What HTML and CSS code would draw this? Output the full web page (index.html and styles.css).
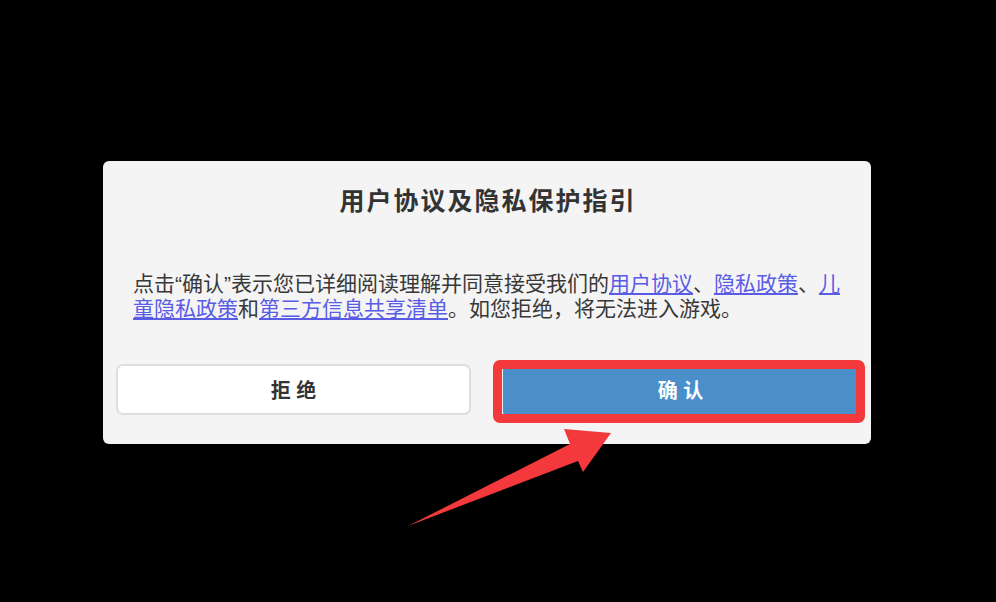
FILE: index.html
```html
<!DOCTYPE html>
<html lang="zh-CN">
<head>
<meta charset="utf-8">
<title>用户协议及隐私保护指引</title>
<link rel="stylesheet" href="styles.css">
</head>
<body>
<div class="stage">
  <div class="dialog">
    <h1 class="title">用户协议及隐私保护指引</h1>
    <p class="msg">点击“确认”表示您已详细阅读理解并同意接受我们的<a class="link" href="#">用户协议</a>、<a class="link" href="#">隐私政策</a>、<a class="link" href="#">儿童隐私政策</a>和<a class="link" href="#">第三方信息共享清单</a>。如您拒绝，将无法进入游戏。</p>
    <div class="actions">
      <button class="btn btn-refuse">拒 绝</button>
      <button class="btn btn-confirm">确 认</button>
    </div>
  </div>
</div>
<div class="highlight"></div>
<svg class="arrow" width="996" height="602" viewBox="0 0 996 602">
  <polygon points="408,526 570,444 564,429 611,433 583,472 578,461" fill="#f4393d"/>
</svg>
</body>
</html>
```

FILE: styles.css
```css
html, body {
  margin: 0;
  padding: 0;
  background: #000;
  width: 996px;
  height: 602px;
  overflow: hidden;
  font-family: "Noto Sans CJK SC", sans-serif;
}

.stage {
  padding: 161px 0 0 103px;
}

.dialog {
  box-sizing: border-box;
  width: 768px;
  background: #f4f4f4;
  border-radius: 6px;
  padding: 20px 13px 29px;
}

.title {
  margin: 0;
  font-size: 25px;
  line-height: 36px;
  font-weight: 700;
  color: #333;
  text-align: center;
  letter-spacing: 2px;
  padding-left: 2px;
}

.msg {
  margin: 54px 17px 0;
  font-family: "Liberation Sans", "Noto Sans CJK SC", sans-serif;
  font-size: 21px;
  line-height: 25px;
  color: #383838;
}

.link {
  color: #5a5ce6;
  text-decoration: underline;
  text-underline-offset: 2px;
}

.actions {
  margin-top: 43px;
  display: grid;
  grid-template-columns: 1fr 1fr;
  gap: 32px;
}

.btn {
  height: 51px;
  font-family: "Liberation Sans", "Noto Sans CJK SC", sans-serif;
  font-size: 20px;
  font-weight: 700;
  border-radius: 7px;
  padding: 0;
  cursor: pointer;
}

.btn-refuse {
  background: #fff;
  border: 2px solid #dedede;
  color: #333;
}

.btn-confirm {
  background: #4a8fc9;
  border: none;
  border-radius: 3px;
  color: #fff;
}

.highlight {
  position: absolute;
  left: 493px;
  top: 360px;
  width: 372px;
  height: 63px;
  box-sizing: border-box;
  border: 9px solid #f4393d;
  border-radius: 7px;
}

.arrow {
  position: absolute;
  left: 0;
  top: 0;
  pointer-events: none;
}
```
